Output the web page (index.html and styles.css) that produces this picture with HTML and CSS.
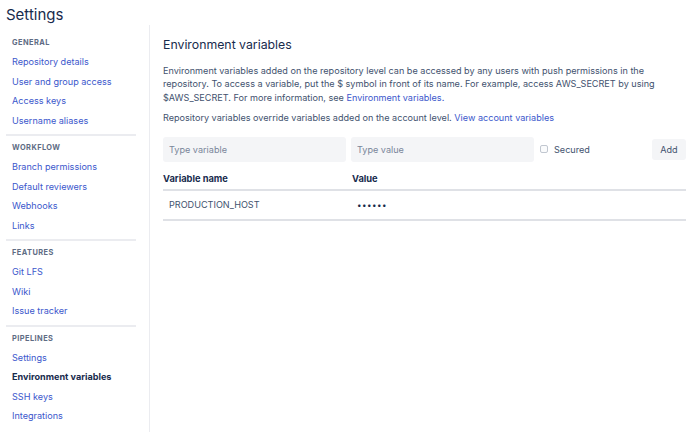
FILE: index.html
```html
<!DOCTYPE html>
<html lang="en">
<head>
<meta charset="utf-8">
<title>Settings</title>
<link rel="stylesheet" href="styles.css">
</head>
<body>
<h1 class="page-title">Settings</h1>
<div class="layout">
  <nav class="sidebar">
    <div class="group first">
      <div class="group-label">General</div>
      <a class="nav-link" href="#">Repository details</a>
      <a class="nav-link" href="#">User and group access</a>
      <a class="nav-link" href="#">Access keys</a>
      <a class="nav-link" href="#">Username aliases</a>
    </div>
    <div class="group">
      <div class="group-label">Workflow</div>
      <a class="nav-link" href="#">Branch permissions</a>
      <a class="nav-link" href="#">Default reviewers</a>
      <a class="nav-link" href="#">Webhooks</a>
      <a class="nav-link" href="#">Links</a>
    </div>
    <div class="group">
      <div class="group-label">Features</div>
      <a class="nav-link" href="#">Git LFS</a>
      <a class="nav-link" href="#">Wiki</a>
      <a class="nav-link" href="#">Issue tracker</a>
    </div>
    <div class="group last">
      <div class="group-label">Pipelines</div>
      <a class="nav-link" href="#">Settings</a>
      <a class="nav-link active" href="#">Environment variables</a>
      <a class="nav-link" href="#">SSH keys</a>
      <a class="nav-link" href="#">Integrations</a>
    </div>
  </nav>
  <main class="content">
    <h2 class="heading">Environment variables</h2>
    <p class="desc">Environment variables added on the repository level can be accessed by any users with push permissions in the repository. To access a variable, put the $ symbol in front of its name. For example, access AWS_SECRET by using $AWS_SECRET. For more information, see <a href="#">Environment variables.</a></p>
    <p class="desc second">Repository variables override variables added on the account level. <a href="#">View account variables</a></p>
    <form class="add-row">
      <input class="field" type="text" placeholder="Type variable">
      <input class="field" type="text" placeholder="Type value">
      <label class="secured"><span class="box"></span>Secured</label>
      <button class="add-btn" type="button">Add</button>
    </form>
    <div class="table">
      <div class="thead">
        <div class="col-name">Variable name</div>
        <div class="col-value">Value</div>
      </div>
      <div class="trow">
        <div class="col-name">PRODUCTION_HOST</div>
        <div class="col-value dots">••••••</div>
      </div>
    </div>
  </main>
</div>
</body>
</html>
```
FILE: styles.css
```css
* { box-sizing: border-box; }
html, body { margin: 0; padding: 0; background: #fff; }
body {
  font-family: Inter, "Noto Sans", "Liberation Sans", sans-serif;
  color: #172b4d;
  width: 700px;
  height: 432px;
  overflow: hidden;
}
.page-title {
  margin: 0;
  padding: 5px 6px 0;
  font-size: 15px;
  line-height: 20px;
  font-weight: 400;
  color: #172b4d;
}
.layout {
  display: flex;
  align-items: stretch;
  height: 407px;
}
.sidebar {
  width: 150px;
  flex: none;
  padding: 0 13px 0 6px;
  border-right: 1px solid #ebecf0;
  display: flex;
  flex-direction: column;
}
.group {
  display: flex;
  flex-direction: column;
  padding: 3px 0 4px;
  border-bottom: 2px solid #ebecf0;
}
.group.first { padding-top: 9px; }
.group.last { border-bottom: none; }
.group-label {
  height: 18px;
  line-height: 18px;
  padding-left: 6px;
  font-size: 7.4px;
  font-weight: 700;
  letter-spacing: 0.45px;
  text-transform: uppercase;
  color: #5e6c84;
}
.nav-link {
  display: block;
  height: 19.5px;
  line-height: 19.5px;
  padding-left: 6px;
  font-size: 9.1px;
  color: #3b57cc;
  text-decoration: none;
  white-space: nowrap;
}
.nav-link.active {
  color: #172b4d;
  font-weight: 700;
}
.content {
  flex: 1;
  padding: 10px 14px 0 13px;
  display: flex;
  flex-direction: column;
}
.heading {
  margin: 0;
  font-size: 12.3px;
  line-height: 20px;
  font-weight: 400;
  color: #172b4d;
}
.desc {
  margin: 9px 0 0;
  font-size: 9.1px;
  line-height: 13.4px;
  color: #42526e;
}
.desc a { color: #3b57cc; text-decoration: none; }
.desc.second { margin-top: 7px; }
.add-row {
  display: flex;
  align-items: center;
  margin: 12px 0 0;
  height: 25px;
}
.field {
  width: 183px;
  height: 25px;
  margin-right: 5px;
  border: none;
  border-radius: 3px;
  background: #f4f5f7;
  padding: 0 6px;
  font-family: inherit;
  font-size: 9.1px;
  color: #172b4d;
}
.field::placeholder { color: #7a869a; }
.secured {
  display: flex;
  align-items: center;
  margin-left: 1px;
  font-size: 9.1px;
  color: #42526e;
}
.box {
  width: 8px;
  height: 8px;
  border: 1px solid #c1c7d0;
  border-radius: 2px;
  background: #fafbfc;
  margin-right: 6px;
}
.add-btn {
  margin-left: auto;
  width: 34px;
  height: 21px;
  border: none;
  border-radius: 3px;
  background: #f4f5f7;
  font-family: inherit;
  font-size: 9.1px;
  color: #42526e;
  padding: 0;
}
.table { margin-top: 9px; }
.thead, .trow {
  display: flex;
  align-items: center;
  border-bottom: 2px solid #dfe1e6;
}
.thead {
  height: 20px;
  padding-bottom: 2px;
  font-size: 9.3px;
  font-weight: 700;
  color: #172b4d;
}
.trow {
  height: 30px;
  font-size: 9.1px;
  color: #42526e;
}
.col-name { width: 189px; }
.trow .col-name { padding-left: 6px; }
.trow .col-value { padding-left: 5px; }
.dots { font-size: 8px; letter-spacing: 0.5px; color: #172b4d; }
```
